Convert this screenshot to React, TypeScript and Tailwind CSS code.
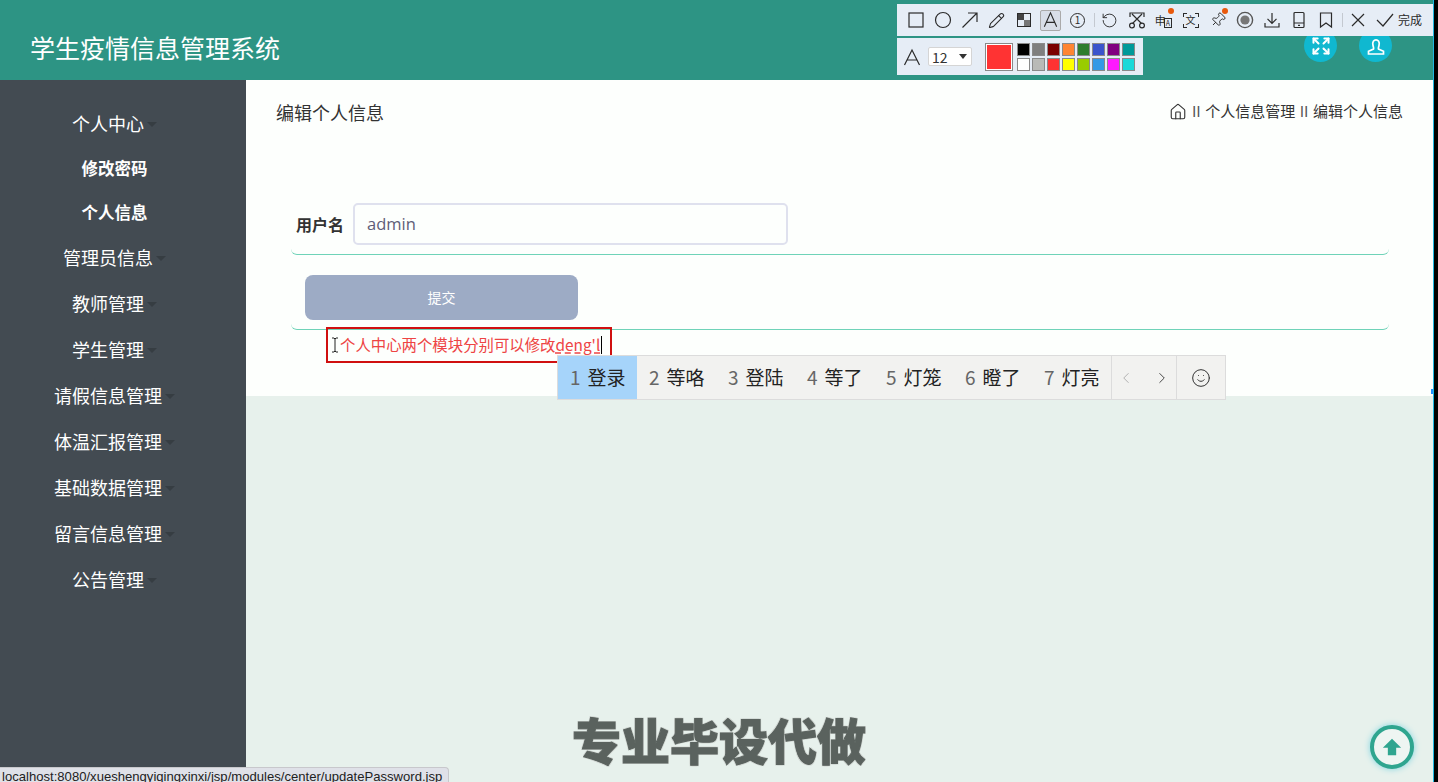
import { ChevronLeft, ChevronRight, Expand, Home, Pencil, Pin, RotateCcw, Smile } from "lucide-react";
import type { ReactNode } from "react";

const menu = [
  { label: "个人中心", sub: ["修改密码", "个人信息"] },
  { label: "管理员信息" },
  { label: "教师管理" },
  { label: "学生管理" },
  { label: "请假信息管理" },
  { label: "体温汇报管理" },
  { label: "基础数据管理" },
  { label: "留言信息管理" },
  { label: "公告管理" },
];

const candidates = ["登录", "等咯", "登陆", "等了", "灯笼", "瞪了", "灯亮"];
const topColors = ["#000000", "#7f7f7f", "#7a0000", "#ff8533", "#2e7d2e", "#3a55cc", "#800080", "#009999"];
const bottomColors = ["#ffffff", "#b9bab7", "#ff3333", "#ffff00", "#99cc00", "#3399e6", "#ff19ff", "#19d9d9"];

function Swatch({ color }: { color: string }) {
  return <div className="h-[13px] w-[13px] border border-[#8a8a8a]" style={{ backgroundColor: color }} />;
}

// 20px tool glyph, stroked like the capture toolbar
function Tool({ children, badge }: { children: ReactNode; badge?: boolean }) {
  return (
    <div className="relative flex h-[24px] w-[27px] shrink-0 items-center justify-center">
      {children}
      {badge && <span className="absolute right-[3px] top-0 h-[6px] w-[6px] rounded-full bg-[#e8590c]" />}
    </div>
  );
}

function Glyph({ d, extra }: { d?: string; extra?: ReactNode }) {
  return (
    <svg width="20" height="20" viewBox="0 0 20 20" fill="none" stroke="#2b2b2b" strokeWidth="1.2">
      {d && <path d={d} />}
      {extra}
    </svg>
  );
}

export default function App() {
  return (
    <div className="relative flex h-[782px] w-[1438px] flex-col overflow-hidden bg-[#e7f1ec] font-['Noto_Sans_CJK_SC',sans-serif]">
      {/* header */}
      <header className="flex h-[80px] shrink-0 items-center bg-[#2d9484] pl-[30px]">
        <h1 className="mt-[16px] text-[25px] font-normal text-white">学生疫情信息管理系统</h1>
        <div className="ml-auto mr-[46px] flex gap-[22px] self-start pt-[29px]">
          <div className="flex h-[33px] w-[33px] items-center justify-center rounded-full bg-[#10b8d0] text-white">
            <Expand size={20} strokeWidth={2.4} />
          </div>
          <div className="flex h-[33px] w-[33px] items-center justify-center rounded-full bg-[#10b8d0]">
            <svg width="20" height="20" viewBox="0 0 20 20" fill="none" stroke="#fff" strokeWidth="1.7">
              <path d="M7 9.5C5 2 15 2 13 9.5C12.5 11.5 12 12 12.5 13L17.5 15.2V18H2.5V15.2L7.5 13C8 12 7.5 11.5 7 9.5Z" />
            </svg>
          </div>
        </div>
      </header>

      <div className="flex min-h-0 flex-1">
        {/* sidebar */}
        <aside className="flex w-[246px] shrink-0 flex-col items-center bg-[#434b52] pr-[17px] pt-[20px] text-white">
          {menu.map((item) => (
            <div key={item.label} className="flex flex-col items-center">
              <div className="-mt-px flex h-[46px] items-center pt-px text-[18px] first:mt-0">
                {item.label}
                <span className="ml-[3px] mt-[2px] h-0 w-0 border-x-[5px] border-t-[5px] border-x-transparent border-t-[#363d42]" />
              </div>
              {item.sub?.map((s) => (
                <div key={s} className="flex h-[44px] items-center text-[16.5px] font-bold">
                  {s}
                </div>
              ))}
            </div>
          ))}
        </aside>

        {/* main */}
        <main className="min-w-0 flex-1">
          <div className="h-[316px] bg-[#fdfffd] pl-[30px] pr-[35px] pt-[19px]">
            <div className="flex items-center justify-between">
              <h2 className="text-[18px] font-normal leading-[26px] text-[#333]">编辑个人信息</h2>
              <div className="-mt-[1px] flex items-center gap-[4.5px] text-[15px] text-[#333]">
                <Home size={18} strokeWidth={1.5} />
                <span className="text-[#555]">II</span>
                <span>个人信息管理</span>
                <span className="text-[#555]">II</span>
                <span>编辑个人信息</span>
              </div>
            </div>

            <div className="ml-[15px] mt-[78px] w-[1098px]">
              <div className="flex h-[52px] items-start rounded-b-[6px] border-b border-[#6fd3b8] pl-[5px]">
                <label className="mt-[9px] w-[57px] text-[16px] font-bold text-[#333]">用户名</label>
                <div className="flex h-[42px] w-[435px] items-center rounded-[5px] border-2 border-[#dfe1ee] pl-[12px] font-['Open_Sans',sans-serif] text-[16.5px] text-[#5f5d78]">
                  admin
                </div>
              </div>
              <div className="h-[75px] rounded-b-[6px] border-b border-[#6fd3b8] pl-[14px] pt-[20px]">
                <button className="flex h-[45px] w-[273px] items-center justify-center rounded-[8px] bg-[#9dabc5] text-[14px] text-white">
                  提交
                </button>
              </div>
            </div>
          </div>
        </main>
      </div>

      {/* right edge of the recording */}
      <div className="absolute bottom-0 right-0 top-0 w-[5px] border-l border-[#1fb8e0] bg-black" />
      <div className="absolute left-[1431px] top-[389px] h-[5px] w-[2px] bg-[#1e90ff]" />

      {/* annotation toolbar */}
      <div className="absolute left-[897px] top-[4px] flex h-[32px] w-[536px] items-center bg-[#e6edf6] pl-[5px] text-[#2b2b2b]">
        <Tool><Glyph extra={<rect x="3" y="3" width="14" height="14" />} /></Tool>
        <Tool><Glyph extra={<circle cx="10" cy="10" r="7.5" />} /></Tool>
        <Tool><Glyph d="M2.5 17.5L17 3M8 3H17V12" /></Tool>
        <Tool><Pencil size={17} strokeWidth={1.5} /></Tool>
        <Tool>
          <div className="grid h-[14px] w-[14px] grid-cols-2 grid-rows-2 border border-[#2b2b2b]">
            <div className="bg-[#444]" />
            <div />
            <div />
            <div className="bg-[#777]" />
          </div>
        </Tool>
        <Tool>
          <div className="flex h-[21px] w-[21px] items-center justify-center rounded-[2px] border border-[#aaa] bg-[#d8dee8]">
            <Glyph d="M3.5 17L10 2.5L16.5 17M5.8 12.5H14.2" />
          </div>
        </Tool>
        <Tool>
          <div className="flex h-[15px] w-[15px] items-center justify-center rounded-full border border-[#2b2b2b] text-[10px] leading-none">
            1
          </div>
        </Tool>
        <div className="ml-[3px] mr-[1px] h-[14px] w-px bg-[#c4c9d0]" />
        <Tool><RotateCcw size={17} strokeWidth={1.3} /></Tool>
        <Tool>
          <Glyph
            d="M3 7V3H17V7M5 4L14.5 13.5M15 4L5.5 13.5"
            extra={
              <>
                <circle cx="5" cy="15.5" r="2.4" />
                <circle cx="15" cy="15.5" r="2.4" />
              </>
            }
          />
        </Tool>
        <Tool badge>
          <span className="text-[11px] leading-none">申</span>
          <span className="ml-[-2px] mt-[6px] border border-[#2b2b2b] px-[1px] text-[7px] leading-[8px]">A</span>
        </Tool>
        <Tool>
          <div className="relative flex h-[15px] w-[16px] items-center justify-center text-[10px] leading-none">
            <span className="absolute left-0 top-0 h-[4px] w-[4px] border-l border-t border-[#2b2b2b]" />
            <span className="absolute right-0 top-0 h-[4px] w-[4px] border-r border-t border-[#2b2b2b]" />
            <span className="absolute bottom-0 left-0 h-[4px] w-[4px] border-b border-l border-[#2b2b2b]" />
            <span className="absolute bottom-0 right-0 h-[4px] w-[4px] border-b border-r border-[#2b2b2b]" />
            文
          </div>
        </Tool>
        <Tool badge><Pin size={16} strokeWidth={1.4} className="rotate-45" /></Tool>
        <Tool>
          <svg width="20" height="20" viewBox="0 0 20 20" fill="none">
            <circle cx="10" cy="10" r="7.6" stroke="#555" strokeWidth="1.4" />
            <circle cx="10" cy="10" r="4.6" fill="#777" />
          </svg>
        </Tool>
        <Tool><Glyph d="M10 3V13M5.5 8.8L10 13.3L14.5 8.8M3 13V17H17V13" /></Tool>
        <Tool>
          <Glyph
            d="M5 13H15M9 15.3H11"
            extra={<rect x="5" y="2.5" width="10" height="15" rx="1" />}
          />
        </Tool>
        <Tool><Glyph d="M4.5 3H15.5V17L10 13L4.5 17Z" /></Tool>
        <div className="ml-[3px] mr-[1px] h-[14px] w-px bg-[#c4c9d0]" />
        <Tool><Glyph d="M4 4L16 16M16 4L4 16" /></Tool>
        <div className="ml-[4px]"><Glyph d="M2 10L8 16L18 4" /></div>
        <span className="ml-[3px] text-[12px] leading-none">完成</span>
      </div>

      {/* text options bar */}
      <div className="absolute left-[897px] top-[38px] flex h-[37px] w-[246px] items-center bg-[#e6edf6] pl-[5px]">
        <Glyph d="M2.5 18L10 3L17.5 18M5.2 13H14.8" />
        <div className="ml-[6px] flex h-[19px] w-[44px] items-center justify-between rounded-[2px] border border-[#d5d5d5] bg-white pl-[3px] pr-[4px] text-[14px] leading-none text-[#333]">
          12
          <span className="h-0 w-0 border-x-[4.5px] border-t-[5px] border-x-transparent border-t-[#333]" />
        </div>
        <div className="ml-[13px] h-[28px] w-[28px] border border-[#888] bg-[#ff3333] outline outline-1 -outline-offset-2 outline-white" />
        <div className="ml-[4px] flex flex-col gap-[2px]">
          <div className="flex gap-[2px]">
            {topColors.map((c) => (
              <Swatch key={c} color={c} />
            ))}
          </div>
          <div className="flex gap-[2px]">
            {bottomColors.map((c) => (
              <Swatch key={c} color={c} />
            ))}
          </div>
        </div>
      </div>

      {/* text annotation being typed */}
      <div className="absolute left-[326px] top-[327px] flex h-[36px] w-[286px] items-center whitespace-nowrap border-2 border-[#d01010] pl-[12px] text-[15.4px] text-[#ee4444]">
        个人中心两个模块分别可以修改
        <span className="underline decoration-dashed">deng'l</span>
        <span className="ml-px h-[18px] w-px bg-black" />
      </div>
      <svg className="absolute left-[331px] top-[337px]" width="8" height="16" viewBox="0 0 8 16" fill="none" stroke="#222" strokeWidth="1">
        <path d="M1 1H3L4 2L5 1H7M4 2V14M1 15H3L4 14L5 15H7" />
      </svg>

      {/* input method candidates */}
      <div className="absolute left-[557px] top-[355px] flex h-[45px] items-center whitespace-nowrap border border-[#dcdcdc] bg-[#f2f2f0] text-[19px] text-[#222]">
        {candidates.map((c, i) => (
          <div key={c} className={`flex h-full w-[79px] shrink-0 items-center pl-[12px] ${i === 0 ? "bg-[#a6d4fa]" : ""}`}>
            <span className="mr-[7px] text-[#666]">{i + 1}</span>
            {c}
          </div>
        ))}
        <div className="flex h-full w-[66px] items-center justify-center gap-[18px] border-x border-[#dcdcdc]">
          <ChevronLeft size={18} strokeWidth={1.2} className="text-[#aaa]" />
          <ChevronRight size={18} strokeWidth={1.3} className="text-[#444]" />
        </div>
        <div className="flex h-full w-[48px] items-center justify-center">
          <Smile size={20} strokeWidth={1.2} className="text-[#333]" />
        </div>
      </div>

      {/* watermark */}
      <div className="absolute left-[572px] top-[706px] text-[49px] font-black leading-[66px] text-[#5a625e] [-webkit-text-stroke:1px_#5a625e] [text-shadow:1px_1px_0_#d0d6d2,-1px_1px_0_#d0d6d2,1px_-1px_0_#d0d6d2,-1px_-1px_0_#d0d6d2]">
        专业毕设代做
      </div>

      {/* back to top */}
      <div className="absolute left-[1370px] top-[725px] flex h-[44px] w-[44px] items-center justify-center rounded-full border-[4px] border-[#2fa58f] bg-[#eef5f2] shadow-[0_0_6px_#7fd4e0]">
        <svg width="20" height="20" viewBox="0 0 24 24" fill="#2fa58f">
          <path d="M12 2L23 13H17V22H7V13H1Z" />
        </svg>
      </div>

      {/* browser status bar */}
      <div className="absolute bottom-0 left-0 h-[15px] w-[449px] overflow-hidden whitespace-nowrap rounded-tr-[4px] border-r border-t border-[#c8c8cc] bg-[#dfe1e8] pl-[2px] font-['Liberation_Sans',sans-serif] text-[13.1px] leading-[18px] text-[#222]">
        localhost:8080/xueshengyiqingxinxi/jsp/modules/center/updatePassword.jsp
      </div>
    </div>
  );
}
